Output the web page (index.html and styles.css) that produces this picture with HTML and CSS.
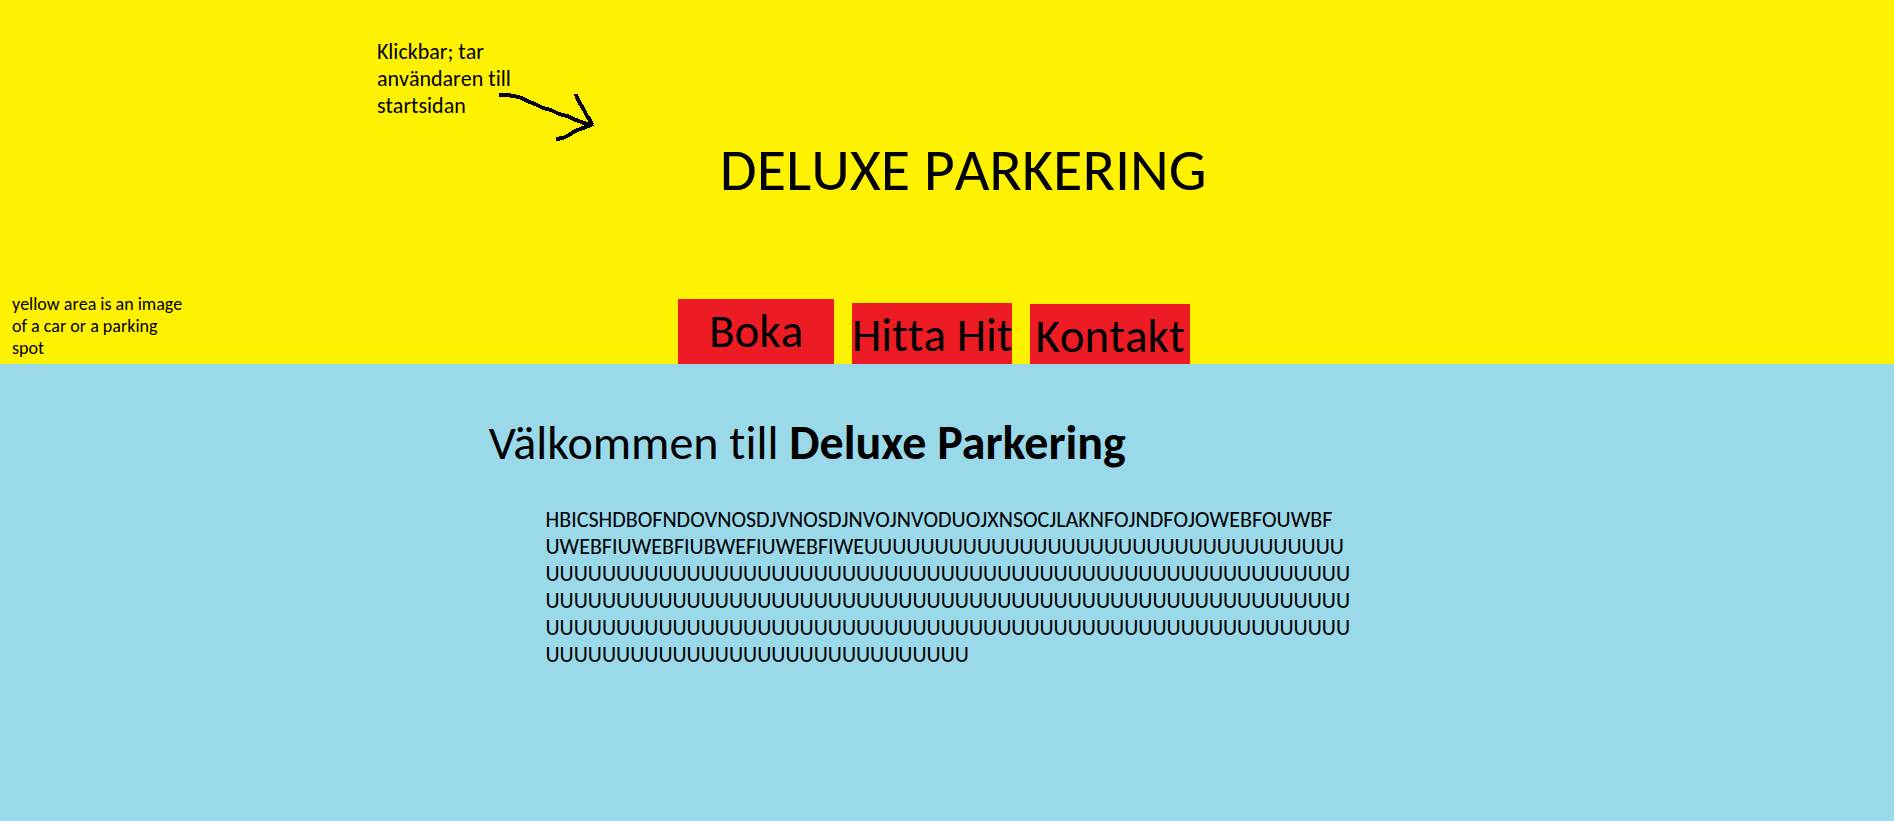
FILE: index.html
```html
<!DOCTYPE html>
<html lang="sv">
<head>
<meta charset="utf-8">
<meta name="viewport" content="width=device-width, initial-scale=1">
<title>Deluxe Parkering</title>
<link rel="stylesheet" href="styles.css">
</head>
<body>
<header class="hero">
  <div class="note">
    <p class="note-text">Klickbar; tar<br>användaren till<br>startsidan</p>
    <svg class="note-arrow" width="98" height="52" viewBox="0 0 98 52" fill="none" stroke="#000" stroke-width="4" stroke-linejoin="round" shape-rendering="crispEdges" aria-hidden="true">
      <path d="M0 4h8l7 1 8 2 5 3 8 3 8 4 8 2 8 4 8 2 9 4 8 3 8 2M77 3l1 4 4 7 3 5 3 6 3 4 2 5M94 33l-10 4-8 3-6 4-6 3-7 1"/>
    </svg>
  </div>
  <h1 class="title"><a href="#start">DELUXE PARKERING</a></h1>
  <div class="hero-foot">
    <p class="caption">yellow area is an image<br>of a car or a parking<br>spot</p>
    <nav class="menu" aria-label="Meny">
      <a class="tab tab-book" href="#boka">Boka</a>
      <a class="tab tab-find" href="#hitta">Hitta Hit</a>
      <a class="tab tab-contact" href="#kontakt">Kontakt</a>
    </nav>
  </div>
</header>
<main class="content" id="start">
  <h2 class="welcome">Välkommen till <strong>Deluxe Parkering</strong></h2>
  <p class="body-text">HBICSHDBOFNDOVNOSDJVNOSDJNVOJNVODUOJXNSOCJLAKNFOJNDFOJOWEBFOUWBF<br>UWEBFIUWEBFIUBWEFIUWEBFIWEUUUUUUUUUUUUUUUUUUUUUUUUUUUUUUUUUU<br>UUUUUUUUUUUUUUUUUUUUUUUUUUUUUUUUUUUUUUUUUUUUUUUUUUUUUUUUU<br>UUUUUUUUUUUUUUUUUUUUUUUUUUUUUUUUUUUUUUUUUUUUUUUUUUUUUUUUU<br>UUUUUUUUUUUUUUUUUUUUUUUUUUUUUUUUUUUUUUUUUUUUUUUUUUUUUUUUU<br>UUUUUUUUUUUUUUUUUUUUUUUUUUUUUU</p>
</main>
</body>
</html>
```
FILE: styles.css
```css
* { box-sizing: border-box; }

body {
  margin: 0;
  min-height: 100vh;
  background: #99d9ea;
  color: #000;
  font-family: Carlito, Lato, sans-serif;
  font-variant-ligatures: none;
  font-kerning: none;
}

h1, h2, p { margin: 0; font-weight: 400; }

a { color: inherit; text-decoration: none; }

.hero {
  background: #fff200;
  padding-top: 38px;
}

.note {
  position: relative;
  margin-left: 19.9%;
}

.note-text {
  font-size: 22px;
  line-height: 27px;
}

.note-arrow {
  position: absolute;
  left: 122px;
  top: 53px;
}

.title {
  margin-top: 19px;
  padding-left: 38%;
  font-size: 60px;
  line-height: 64px;
  white-space: nowrap;
}

.hero-foot {
  display: grid;
  grid-template-columns: 35.8% auto;
  align-items: end;
  margin-top: 91px;
}

.caption {
  padding: 0 0 5px 12px;
  font-size: 18px;
  line-height: 22px;
}

.menu {
  display: flex;
  align-items: flex-end;
  gap: 18px;
}

.tab {
  width: 160px;
  padding-top: 4px;
  background: #ed1c24;
  font-size: 47px;
  line-height: 56px;
  text-align: center;
  white-space: nowrap;
}

.tab-book {
  width: 156px;
  padding-bottom: 5px;
}

.tab-find { padding-bottom: 1px; }

.content { padding: 52px 0 24px; }

.welcome {
  padding-left: 25.8%;
  font-size: 48px;
  line-height: 54px;
  font-kerning: normal;
  white-space: nowrap;
}

.welcome strong { font-weight: 700; }

.body-text {
  margin-top: 36px;
  padding-left: 28.8%;
  font-size: 22px;
  line-height: 27px;
  white-space: nowrap;
}
```
